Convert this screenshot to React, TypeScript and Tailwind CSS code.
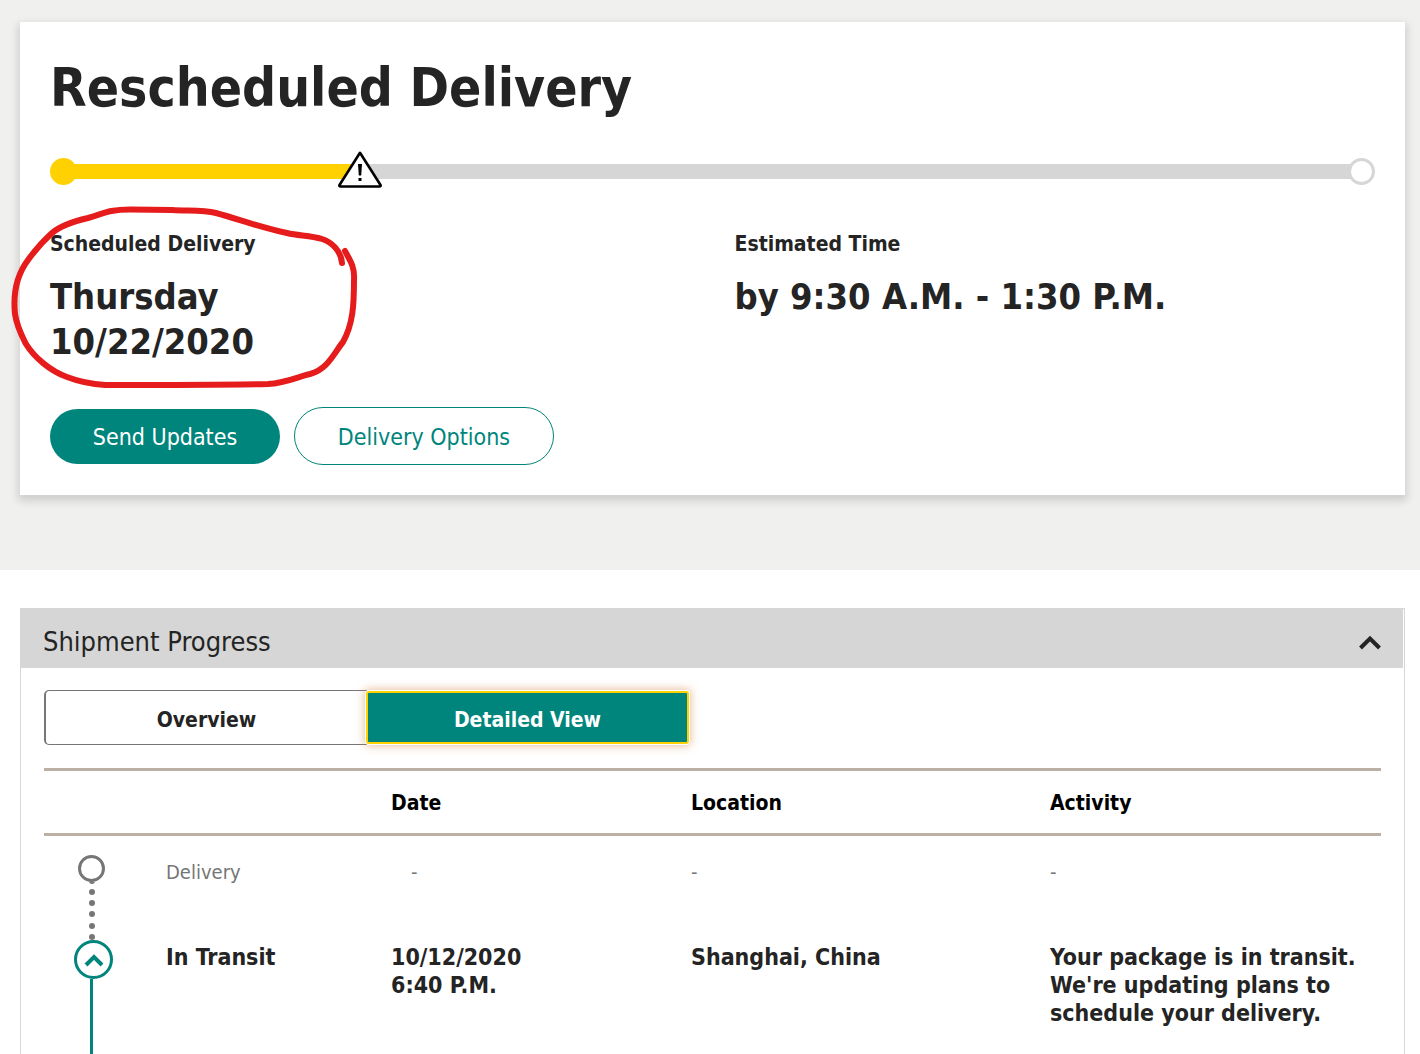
import { useState } from 'react';

interface ShipmentEvent {
  status: string;
  date: string;
  location: string;
  activity: string;
  isPending: boolean;
}

const events: ShipmentEvent[] = [
  { status: 'Delivery', date: '-', location: '-', activity: '-', isPending: true },
  {
    status: 'In Transit',
    date: '10/12/2020\n6:40 P.M.',
    location: 'Shanghai, China',
    activity: "Your package is in transit. We're updating plans to schedule your delivery.",
    isPending: false,
  },
];

function WarningIcon() {
  return (
    <svg className="absolute left-[288px] -top-[7px] w-11 h-[37px]" viewBox="0 0 44 37" aria-label="Delay">
      <path d="M22 1.8 L42.5 34 Q43 35.5 41.5 35.5 H2.5 Q1 35.5 1.5 34 Z" fill="#fff" stroke="#000" strokeWidth="2.6" strokeLinejoin="round" />
      <path d="M20 13 h4 l-0.8 11.5 h-2.4 Z" fill="#000" />
      <rect x="20.5" y="27" width="3" height="3" fill="#000" />
    </svg>
  );
}

function ProgressBar() {
  return (
    <div className="relative flex items-center mt-9 h-[27px]">
      <div className="w-[27px] h-[27px] rounded-full bg-[#ffd100]" />
      <div className="-ml-1 w-[290px] h-[15px] bg-[#ffd100]" />
      <div className="flex-1 h-[15px] bg-[#d6d6d6]" />
      <div className="-ml-1 w-[27px] h-[27px] rounded-full border-3 border-[#d6d6d6] bg-white" />
      <WarningIcon />
    </div>
  );
}

// Hand-drawn marker around the scheduled date
function MarkerCircle() {
  return (
    <svg className="absolute -left-[50px] -top-10 w-[380px] h-[210px] pointer-events-none" viewBox="0 0 380 210" fill="none" aria-hidden="true">
      <path
        d="M342 73 C341 60 331 52 322 49 C310 45 299 46 287 43 C262 38 241 30 216 23 C203 20 190 21 172 20 L130 19.500 C108 19.500 103 24 88 28 C71 32 59 37 52 43 C42 52 36 59 28 70 C16 86 13 104 15 124 C17 137 21 144 26 154 C34 167 50 181 67 187 C80 192 89 194 105 195 C160 195 220 195 268 194 C286 193 300 186 310 184 C328 179 334 163 343 152 C353 134 354 115 354 90 C355 76 349 69 345 61"
        stroke="#e61c1c"
        strokeWidth="6"
        strokeLinecap="round"
        strokeLinejoin="round"
      />
    </svg>
  );
}

function DeliveryCard() {
  return (
    <section className="bg-[#f0f0ee] pt-[22px] pb-[75px] pl-5 pr-[15px]">
      <div className="bg-white px-[30px] pt-8 pb-[30px] shadow-[0_4px_8px_2px_rgba(0,0,0,0.14)]">
        <h1 className="text-[53px] leading-[68px] font-bold">Rescheduled Delivery</h1>
        <ProgressBar />

        <div className="grid grid-cols-2 gap-11 mt-[45px]">
          <div className="relative">
            <h2 className="text-[21px] leading-7 font-bold">Scheduled Delivery</h2>
            <p className="mt-4 text-[36px] leading-[45px] font-bold">
              Thursday
              <br />
              10/22/2020
            </p>
            <MarkerCircle />
          </div>
          <div>
            <h2 className="text-[21px] leading-7 font-bold">Estimated Time</h2>
            <p className="mt-4 text-[36px] leading-[45px] font-bold">by 9:30 A.M. - 1:30 P.M.</p>
          </div>
        </div>

        <div className="flex items-center gap-3.5 mt-[43px]">
          <button type="button" className="w-[230px] h-[55px] pt-0.5 rounded-full bg-[#00857d] text-white text-[23px]">
            Send Updates
          </button>
          <button type="button" className="w-[260px] h-[58px] pt-0.5 rounded-full border border-[#00857d] text-[#00857d] text-[23px]">
            Delivery Options
          </button>
        </div>
      </div>
    </section>
  );
}

function Timeline() {
  return (
    <div className="flex flex-col items-start pl-[30px] pt-[19px] h-[218px]">
      <div className="ml-1 w-[27px] h-[27px] shrink-0 rounded-full border-3 border-[#767676]" />
      <svg className="ml-[15px] w-1.5 h-[58px] shrink-0" viewBox="0 0 6 58" fill="#767676" aria-hidden="true">
        <circle cx="3" cy="-1" r="3" />
        <circle cx="3" cy="10" r="3" />
        <circle cx="3" cy="21" r="3" />
        <circle cx="3" cy="32" r="3" />
        <circle cx="3" cy="44" r="3" />
        <circle cx="3" cy="55" r="3" />
      </svg>
      <button
        type="button"
        aria-label="Collapse transit details"
        className="flex items-center justify-center w-[39px] h-[39px] shrink-0 rounded-full border-3 border-[#00857d] bg-white"
      >
        <svg className="w-5 h-3.5" viewBox="0 0 20 14" fill="none" stroke="#00857d" strokeWidth="4" aria-hidden="true">
          <path d="M2 12 L10 4 L18 12" />
        </svg>
      </button>
      <div className="ml-4 w-[3px] flex-1 bg-[#00857d]" />
    </div>
  );
}

function EventTable() {
  return (
    <table className="w-full mt-[23px] table-fixed text-left">
      <colgroup>
        <col className="w-[122px]" />
        <col className="w-[225px]" />
        <col className="w-[300px]" />
        <col className="w-[359px]" />
        <col />
      </colgroup>
      <thead>
        <tr className="h-[65px] border-y-3 border-[#bbb0a3] text-[21px] text-black *:pt-1">
          <td />
          <td />
          <th scope="col">Date</th>
          <th scope="col">Location</th>
          <th scope="col">Activity</th>
        </tr>
      </thead>
      <tbody>
        {events.map((event, idx) => (
          <tr
            key={event.status}
            className={
              event.isPending
                ? 'h-[94px] align-top text-[20px] leading-7 text-[#767676] *:pt-[22px]'
                : 'h-[124px] align-top text-[23px] leading-7 font-bold *:pt-3.5'
            }
          >
            {idx === 0 && (
              <td rowSpan={events.length} className="pt-0!">
                <Timeline />
              </td>
            )}
            <td>{event.status}</td>
            <td className={event.isPending ? 'pl-5' : 'whitespace-pre-line'}>{event.date}</td>
            <td>{event.location}</td>
            <td>{event.activity}</td>
          </tr>
        ))}
      </tbody>
    </table>
  );
}

function ShipmentProgress() {
  const [isOpen, setIsOpen] = useState(true);

  return (
    <section className="mt-[38px] ml-5 mr-[15px] border-x border-t border-[#d6d6d6]">
      <div className="flex items-center justify-between h-[59px] mr-px pl-[22px] pr-[21px] pt-1.5 bg-[#d6d6d6]">
        <h2 className="text-[27px] leading-9">Shipment Progress</h2>
        <button type="button" aria-label="Toggle shipment progress" aria-expanded={isOpen} onClick={() => setIsOpen(!isOpen)}>
          <svg className="w-6 h-4" viewBox="0 0 24 16" fill="none" stroke="#242424" strokeWidth="4" aria-hidden="true">
            <path d="M2.500 14 L12 4.500 L21.500 14" />
          </svg>
        </button>
      </div>

      {isOpen && (
        <div className="px-[23px] pt-[22px]">
          <div className="flex items-center h-[55px] text-[21px] font-bold">
            <button type="button" className="w-[323px] h-[55px] pt-1.5 rounded-l-[5px] border border-l-2 border-r-0 border-[#767676]">
              Overview
            </button>
            <button
              type="button"
              className="-ml-px w-[323px] h-[53px] pt-1.5 rounded-[3px] border-2 border-[#ffd100] bg-[#00857d] text-white shadow-[0_0_0_1px_#fff,0_0_8px_2px_rgba(214,140,80,0.55)]"
            >
              Detailed View
            </button>
          </div>
          <EventTable />
        </div>
      )}
    </section>
  );
}

export default function App() {
  return (
    <main className="bg-white text-[#242424] font-['DejaVu_Sans_Condensed','Noto_Sans',sans-serif]">
      <DeliveryCard />
      <ShipmentProgress />
    </main>
  );
}
